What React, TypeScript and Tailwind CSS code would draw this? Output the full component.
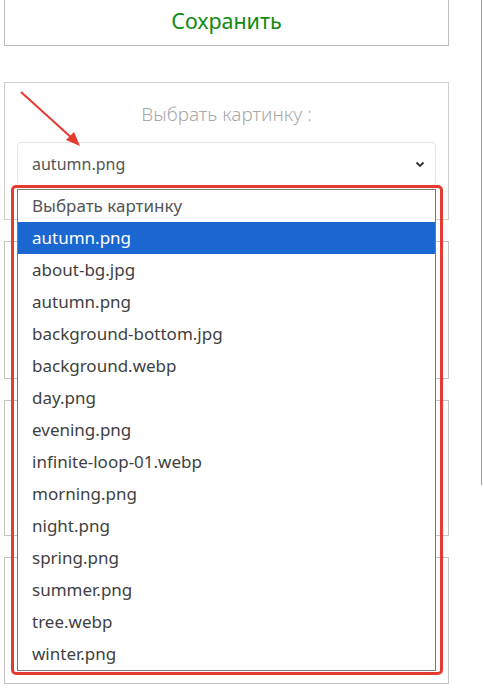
import React from 'react'

const images = [
  'autumn.png',
  'about-bg.jpg',
  'autumn.png',
  'background-bottom.jpg',
  'background.webp',
  'day.png',
  'evening.png',
  'infinite-loop-01.webp',
  'morning.png',
  'night.png',
  'spring.png',
  'summer.png',
  'tree.webp',
  'winter.png',
]

function Card({ h }: { h: string }) {
  return <div className={`border border-[#c4c4c4] bg-white ${h}`} />
}

export default function App() {
  return (
    <div
      className="relative w-[483px] h-[692px] overflow-hidden bg-white"
      style={{ fontFamily: '"Noto Sans", "Open Sans", Arial, sans-serif' }}
    >
      {/* scrollbar edge */}
      <div className="absolute right-0 top-0 w-[2px] h-[485px] border-l border-[#9a9a9a]" />

      <div className="ml-1 w-[445px] flex flex-col">
        {/* Save button card */}
        <div className="h-[46px] border-x border-b border-[#bdbdbd] flex items-center justify-center">
          <span className="text-[21.5px] text-[#118a11] pb-[2px]">Сохранить</span>
        </div>

        {/* Picture select card */}
        <div className="mt-[36px] h-[138px] border border-[#cfcfcf] px-3 pt-[17px]">
          <div className="text-center text-[19px] font-light text-[#a8a8a8] leading-[28px]">
            Выбрать картинку :
          </div>
          <div className="mt-[14px] h-[44px] border border-[#e6e6e6] rounded-[4px] flex items-center justify-between pl-[14px] pr-[10px]">
            <span className="text-[16px] text-[#555]">autumn.png</span>
            <svg width="10" height="7" viewBox="0 0 10 7" fill="none">
              <path d="M1.5 1.5 L5 5 L8.5 1.5" stroke="#333" strokeWidth="1.8" />
            </svg>
          </div>
        </div>

        <div className="mt-[21px]"><Card h="h-[138px]" /></div>
        <div className="mt-[21px]"><Card h="h-[136px]" /></div>
        <div className="mt-[21px]"><Card h="h-[127px]" /></div>
      </div>

      {/* red arrow */}
      <svg className="absolute left-0 top-0" width="100" height="160" viewBox="0 0 100 160">
        <line x1="21" y1="92" x2="74" y2="140" stroke="#e53a30" strokeWidth="2" />
        <polygon points="80,146 66,140 74,132" fill="#e53a30" />
      </svg>

      {/* open dropdown list */}
      <div className="absolute left-[17px] top-[189px] w-[419px] h-[482px] border border-[#7a7a7a] bg-white">
        <div className="h-[32px] flex items-center pl-[14px] text-[17px] text-[#555]">Выбрать картинку</div>
        {images.map((name, i) => (
          <div
            key={i}
            className={`h-[32px] flex items-center pl-[14px] text-[17px] ${
              i === 0 ? 'bg-[#1a67d2] text-white' : 'text-[#3f3f3f]'
            }`}
          >
            {name}
          </div>
        ))}
      </div>

      {/* red highlight frame */}
      <div className="absolute left-[11px] top-[185px] w-[432px] h-[490px] border-[3px] border-[#e53a30] rounded-[5px]" />
    </div>
  )
}
